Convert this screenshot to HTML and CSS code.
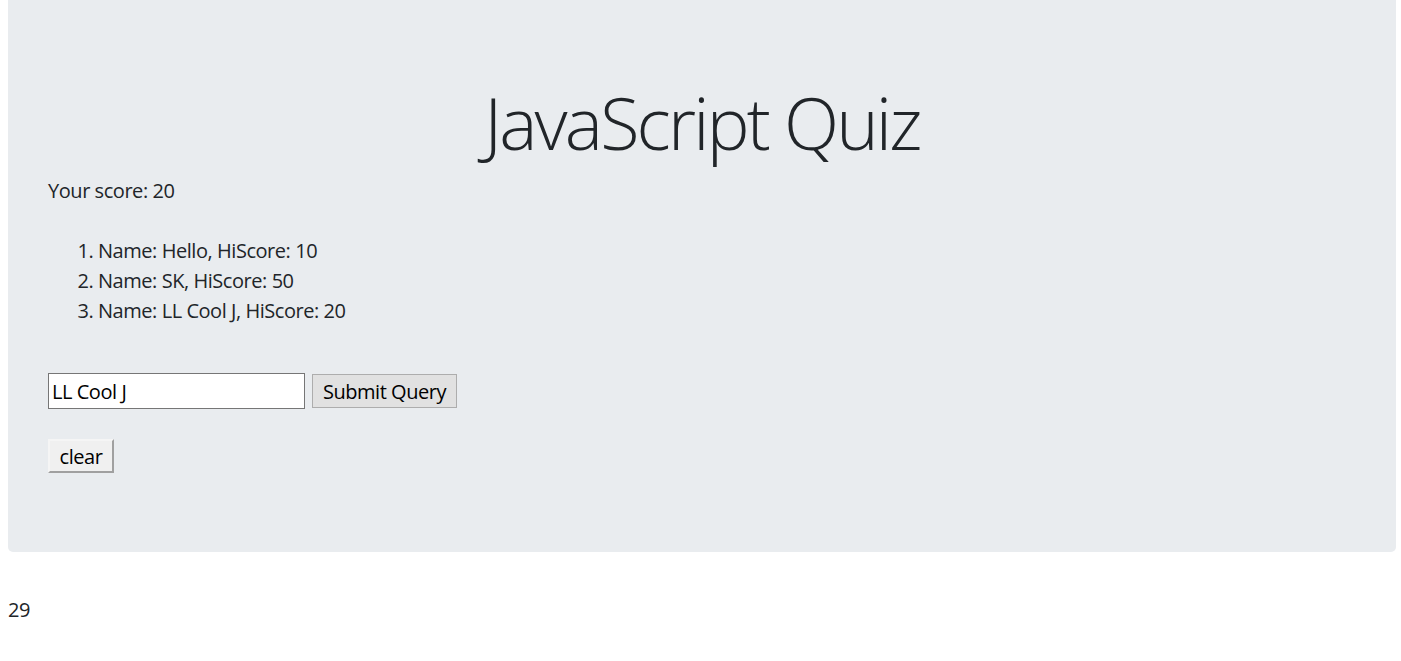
FILE: index.html
```html
<!DOCTYPE html>
<html>
<head>
<meta charset="utf-8">
<title>JavaScript Quiz</title>
<link rel="stylesheet" href="styles.css">
</head>
<body>
<div class="jumbotron">
  <h1 class="title">JavaScript Quiz</h1>
  <p class="score">Your score: 20</p>
  <ol class="scores">
    <li>Name: Hello, HiScore: 10</li>
    <li>Name: SK, HiScore: 50</li>
    <li>Name: LL Cool J, HiScore: 20</li>
  </ol>
  <form class="entry">
    <input class="name-input" type="text" value="LL Cool J">
    <button class="submit-btn" type="button">Submit Query</button>
  </form>
  <button class="clear-btn" type="button">clear</button>
</div>
<div class="footer-count">29</div>
</body>
</html>
```

FILE: styles.css
```css
html, body {
  margin: 0;
  padding: 0;
}
body {
  font-family: "Open Sans", "Noto Sans", sans-serif;
  font-size: 20px;
  line-height: 1.5;
  letter-spacing: -0.45px;
  color: #212529;
  background: #fff;
  padding: 0 5px 0 8px;
}
.jumbotron {
  background: #e9ecef;
  border-radius: 0 0 5px 5px;
  padding: 68px 40px 79px 40px;
  font-size: 20px;
  line-height: 30px;
}
.title {
  margin: 0;
  text-align: center;
  font-weight: 300;
  font-size: 72px;
  line-height: 108px;
  letter-spacing: -2.8px;
}
.score {
  margin: 0 0 30px 0;
}
.scores {
  margin: 0 0 47px 0;
  padding-left: 50px;
}
.entry {
  display: flex;
  align-items: center;
  gap: 7px;
  margin: 0 0 30px 0;
}
.name-input {
  box-sizing: border-box;
  width: 257px;
  height: 36px;
  border: 1px solid #767676;
  background: #fff;
  font-family: inherit;
  font-size: 20px;
  letter-spacing: -0.45px;
  padding: 0 3px;
  color: #000;
}
.submit-btn {
  box-sizing: border-box;
  height: 34px;
  width: 145px;
  border: 1px solid #adadad;
  background: #e1e1e1;
  font-family: inherit;
  font-size: 20px;
  letter-spacing: -0.45px;
  color: #000;
  padding: 0;
}
.clear-btn {
  display: block;
  box-sizing: border-box;
  height: 34px;
  width: 66px;
  border: 2px solid;
  border-color: #f5f5f5 #a0a0a0 #a0a0a0 #f5f5f5;
  background: #f0f0f0;
  font-family: inherit;
  font-size: 20px;
  letter-spacing: -0.45px;
  color: #000;
  padding: 0;
}
.footer-count {
  margin-top: 43px;
  font-size: 20px;
}
```
